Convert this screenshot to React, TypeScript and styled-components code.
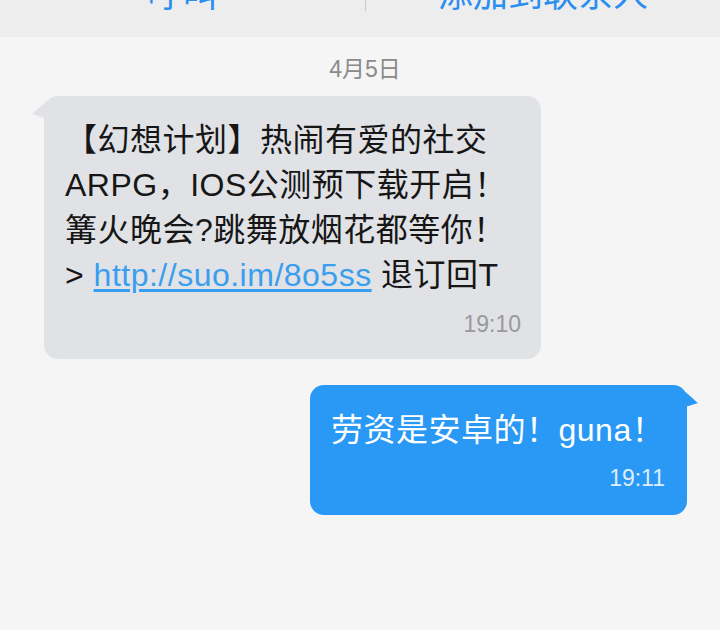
import styled, { createGlobalStyle } from "styled-components";

const GlobalStyle = createGlobalStyle`
  html, body {
    margin: 0;
    padding: 0;
    background: #f5f5f5;
  }
  body {
    font-family: "Liberation Sans", "Noto Sans CJK SC", sans-serif;
  }
`;

const StPage = styled.div`
  width: 720px;
  height: 630px;
  overflow: hidden;
  background: #f5f5f5;
`;

const StTopBar = styled.div`
  display: grid;
  grid-template-columns: 365px 1px 1fr;
  height: 37px;
  overflow: hidden;
  background: #ededed;
`;

const StAction = styled.div`
  display: flex;
  justify-content: center;
  margin-top: -22px;
  font-size: 35px;
  line-height: 34px;
  height: 34px;
  color: #2a8ef0;
`;

const StDivider = styled.div`
  height: 11px;
  background: #c8c8c8;
`;

const StThread = styled.div`
  display: flex;
  flex-direction: column;
  padding: 19px 0 0;
`;

const StDate = styled.div`
  text-align: center;
  font-size: 23px;
  line-height: 26px;
  color: #8a8a8a;
  margin-left: 10px;
`;

const StRow = styled.div<{ $mine?: boolean }>`
  display: flex;
  justify-content: ${(p) => (p.$mine ? "flex-end" : "flex-start")};
  padding: ${(p) => (p.$mine ? "26px 33px 0 0" : "14px 0 0 44px")};
`;

const StBubble = styled.div<{ $mine?: boolean }>`
  position: relative;
  box-sizing: border-box;
  width: ${(p) => (p.$mine ? "377px" : "497px")};
  padding: ${(p) => (p.$mine ? "23px 22px 24px 21px" : "22px 20px 22px 21px")};
  border-radius: 14px;
  background: ${(p) => (p.$mine ? "#2a99f6" : "#e0e2e5")};
  color: ${(p) => (p.$mine ? "#ffffff" : "#161616")};
`;

const StText = styled.div`
  font-size: 32px;
  line-height: 45px;
  letter-spacing: 0.5px;
`;

const StLink = styled.a`
  color: #3a9ef0;
  text-decoration: underline;
  text-underline-offset: 3px;
`;

const StTime = styled.div<{ $mine?: boolean }>`
  text-align: right;
  font-size: 23px;
  line-height: 26px;
  margin-top: ${(p) => (p.$mine ? "12px" : "13px")};
  color: ${(p) => (p.$mine ? "rgba(255,255,255,0.85)" : "#9a9a9a")};
`;

const StTail = styled.svg<{ $mine?: boolean }>`
  position: absolute;
  top: 5px;
  width: 16px;
  height: 24px;
  ${(p) => (p.$mine ? "right: -11px; transform: scaleX(-1);" : "left: -12px;")}
`;

const Tail = ({ mine }: { mine?: boolean }) => (
  <StTail $mine={mine} viewBox="0 0 16 24">
    <path
      d="M16 0 C10 3, 5 9, 0 13 C5 15, 11 16, 16 18 Z"
      fill={mine ? "#2a99f6" : "#e0e2e5"}
    />
  </StTail>
);

const App = () => {
  return (
    <StPage>
      <GlobalStyle />
      <StTopBar>
        <StAction>呼叫</StAction>
        <StDivider />
        <StAction>添加到联系人</StAction>
      </StTopBar>
      <StThread>
        <StDate>4月5日</StDate>
        <StRow>
          <StBubble>
            <Tail />
            <StText>
              【幻想计划】热闹有爱的社交
              <br />
              ARPG，IOS公测预下载开启！
              <br />
              篝火晚会?跳舞放烟花都等你！
              <br />
              {"> "}
              <StLink>http://suo.im/8o5ss</StLink> 退订回T
            </StText>
            <StTime>19:10</StTime>
          </StBubble>
        </StRow>
        <StRow $mine>
          <StBubble $mine>
            <Tail mine />
            <StText>劳资是安卓的！guna！</StText>
            <StTime $mine>19:11</StTime>
          </StBubble>
        </StRow>
      </StThread>
    </StPage>
  );
};

export default App;
